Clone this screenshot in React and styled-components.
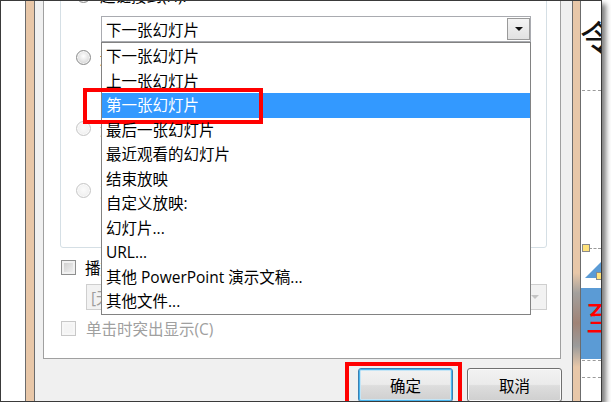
import React from 'react';
import styled, { createGlobalStyle } from 'styled-components';

const GlobalStyle = createGlobalStyle`
  html, body {
    margin: 0;
    padding: 0;
    background: #fff;
  }
  body {
    font-family: "Open Sans", "Noto Sans CJK SC", sans-serif;
    font-size: 15.5px;
    color: #000;
  }
`;

const Frame = styled.div`
  width: 602px;
  height: 402px;
  box-sizing: border-box;
  border: 1px solid #3a3a3a;
  box-shadow: 4px 4px 5px rgba(0, 0, 0, 0.5);
  display: flex;
  overflow: hidden;
  background: #fff;
`;

const Gutter = styled.div`
  flex: none;
  width: 24px;
  background: #fff;
`;

const Sash = styled.div`
  flex: none;
  width: ${p => p.$w}px;
  box-sizing: border-box;
  border-left: 1px solid #6c6c6c;
  border-right: 1px solid #6c6c6c;
  background: ${p => p.$shaded
    ? 'linear-gradient(to bottom, #e8c7a8 0, #e8c7a8 272px, #a3a09d 292px, #a08376 322px, #9b9b9b 345px, #e8c7a8 366px, #e8c7a8 100%)'
    : '#e8c7a8'};
`;

const Dialog = styled.div`
  flex: none;
  width: 537px;
  background: #f0f0f0;
  display: flex;
  flex-direction: column;
`;

const Panel = styled.div`
  flex: none;
  height: 358px;
  margin: 0 11px 0 8px;
  box-sizing: border-box;
  border: 1px solid #a0a0a0;
  border-top: none;
  background: #fff;
  overflow: hidden;
  display: flex;
  flex-direction: column;
`;

const GroupBox = styled.div`
  margin: -27px 13px 0 16px;
  padding: 10px 0 13px 15px;
  border: 1px solid #d5dfe5;
  border-radius: 3px;
  display: flex;
  flex-direction: column;
`;

const OptionRow = styled.div`
  display: flex;
  align-items: center;
  gap: 9px;
  height: 20px;
  margin-top: ${p => p.$mt || 0}px;
  white-space: nowrap;
  color: ${p => (p.$disabled ? '#a0a0a0' : '#000')};
`;

const Radio = styled.span`
  flex: none;
  width: 15px;
  height: 15px;
  box-sizing: border-box;
  border-radius: 50%;
  border: 1px solid ${p => (p.$disabled ? '#c6c6c6' : '#8c8d8d')};
  background: ${p => (p.$disabled
    ? 'radial-gradient(circle at 50% 45%, #fbfbfb 0%, #f1f1f1 60%, #e6e6e6 100%)'
    : 'radial-gradient(circle at 50% 40%, #ffffff 0%, #e4e4e4 50%, #c4c4c4 100%)')};
  box-shadow: inset 0 0 0 1px rgba(255, 255, 255, 0.7);
`;

const ComboWrap = styled.div`
  position: relative;
  margin: ${p => p.$mt || 0}px 15px 0 25px;
`;

const Combo = styled.div`
  height: 26px;
  box-sizing: border-box;
  margin: ${p => p.$margin || 0};
  border: 1px solid ${p => (p.$disabled ? '#cfcfcf' : '#a9abb0')};
  background: ${p => (p.$disabled ? '#f2f2f2' : '#fff')};
  color: ${p => (p.$disabled ? '#9e9e9e' : '#000')};
  display: flex;
  align-items: center;
  padding-left: 4px;
  white-space: nowrap;
`;

const DropButton = styled.span`
  flex: none;
  width: 23px;
  height: 22px;
  margin-left: auto;
  box-sizing: border-box;
  border: 1px solid ${p => (p.$disabled ? 'transparent' : '#9a9a9a')};
  background: ${p => (p.$disabled ? 'transparent' : 'linear-gradient(#f4f4f4, #e2e2e2)')};
  display: flex;
  align-items: center;
  justify-content: center;

  &::after {
    content: '';
    border-left: 4px solid transparent;
    border-right: 4px solid transparent;
    border-top: 4px solid ${p => (p.$disabled ? '#c4c4c4' : '#111')};
  }
`;

const TextBox = styled.div`
  height: 26px;
  margin: ${p => p.$mt || 0}px 15px 0 25px;
  box-sizing: border-box;
  border: 1px solid #cfcfcf;
  background: #f4f4f4;
`;

const DropList = styled.ul`
  position: absolute;
  z-index: 10;
  top: 100%;
  left: 0;
  right: 0;
  margin: 0;
  padding: 1px 0 0;
  list-style: none;
  box-sizing: border-box;
  border: 1px solid #828282;
  background: #fff;
`;

const ListItem = styled.li`
  position: relative;
  height: 24.5px;
  line-height: 24.5px;
  padding-left: 4px;
  white-space: nowrap;
  background: ${p => (p.$selected ? '#3399ff' : 'transparent')};
  color: ${p => (p.$selected ? '#fff' : '#000')};
`;

const Callout = styled.span`
  position: absolute;
  left: ${p => p.$left}px;
  top: ${p => p.$top}px;
  width: ${p => p.$width}px;
  height: ${p => p.$height}px;
  box-sizing: border-box;
  border: 4px solid #ff0000;
  pointer-events: none;
`;

const CheckRow = styled.div`
  display: flex;
  align-items: center;
  gap: ${p => p.$gap || 9}px;
  height: 16px;
  margin: ${p => p.$mt || 0}px 0 0 17px;
  white-space: nowrap;
  color: ${p => (p.$disabled ? '#a0a0a0' : '#000')};
`;

const CheckBox = styled.span`
  flex: none;
  width: 15px;
  height: 15px;
  box-sizing: border-box;
  border: 1px solid ${p => (p.$disabled ? '#c8c8c8' : '#8e8f8f')};
  background: ${p => (p.$disabled ? '#f4f4f4' : 'linear-gradient(135deg, #c9c9c9, #f5f5f5)')};
  box-shadow: inset 0 0 0 2px ${p => (p.$disabled ? '#f7f7f7' : '#f1f1f1')};
`;

const ButtonRow = styled.div`
  display: flex;
  justify-content: flex-end;
  gap: 14px;
  padding: 9px 10px 0 0;
`;

const Button = styled.div`
  position: relative;
  flex: none;
  width: 95px;
  height: 34px;
  box-sizing: border-box;
  border: 1px solid ${p => (p.$default ? '#3c7fb1' : '#707070')};
  border-radius: 3px;
  background: linear-gradient(#f2f2f2 0%, #ebebeb 48%, #dddddd 52%, #cfcfcf 100%);
  box-shadow: ${p => (p.$default
    ? 'inset 0 0 0 1px #48b5ee, inset 0 0 0 2px #c4e5f6'
    : 'inset 0 0 0 1px #fafafa')};
  display: flex;
  align-items: center;
  justify-content: center;
  font-family: "Noto Sans CJK SC", sans-serif;
  font-size: 15.5px;
`;

const Slide = styled.div`
  position: relative;
  flex: none;
  width: 20px;
  background: #fff;
  overflow: hidden;
`;

const SlideChar = styled.span`
  position: absolute;
  left: ${p => p.$left}px;
  top: ${p => p.$top}px;
  font-family: "Noto Sans CJK SC", sans-serif;
  font-size: ${p => p.$size}px;
  line-height: 1;
  color: ${p => p.$color};
`;

const Guide = styled.div`
  position: absolute;
  left: ${p => p.$left}px;
  right: 0;
  top: ${p => p.$top}px;
  border-top: 1px dashed #9a9a9a;
`;

const Handle = styled.span`
  position: absolute;
  left: ${p => p.$left}px;
  top: ${p => p.$top}px;
  width: 6px;
  height: 6px;
  background: #ffe27a;
  border: 1px solid #8a8a8a;
`;

const ShapeBody = styled.div`
  position: absolute;
  left: 0;
  right: 0;
  top: 287px;
  height: 71px;
  background: #5b9bd5;
`;

const Arrowhead = styled.svg`
  position: absolute;
  left: 0;
  top: 260px;
`;

const targets = [
  '下一张幻灯片',
  '上一张幻灯片',
  '第一张幻灯片',
  '最后一张幻灯片',
  '最近观看的幻灯片',
  '结束放映',
  '自定义放映:',
  '幻灯片...',
  'URL...',
  '其他 PowerPoint 演示文稿...',
  '其他文件...',
];

export default function App() {
  return (
    <>
      <GlobalStyle />
      <Frame>
        <Gutter />
        <Sash $w={10} />
        <Dialog>
          <Panel>
            <GroupBox>
              <OptionRow>
                <Radio />
                <span>超链接到(H):</span>
              </OptionRow>
              <ComboWrap $mt={11}>
                <Combo>
                  下一张幻灯片
                  <DropButton />
                </Combo>
                <DropList>
                  {targets.map((t, i) => (
                    <ListItem key={t} $selected={i === 2}>
                      {t}
                      {i === 2 && <Callout $left={-19} $top={-5} $width={180} $height={36} />}
                    </ListItem>
                  ))}
                </DropList>
              </ComboWrap>
              <OptionRow $mt={5}>
                <Radio />
                <span>运行程序(R):</span>
              </OptionRow>
              <TextBox $mt={8} />
              <OptionRow $mt={17} $disabled>
                <Radio $disabled />
                <span>运行宏(M):</span>
              </OptionRow>
              <TextBox $mt={8} />
              <OptionRow $mt={8} $disabled>
                <Radio $disabled />
                <span>对象动作(A):</span>
              </OptionRow>
              <TextBox $mt={8} />
            </GroupBox>

            <CheckRow $mt={11}>
              <CheckBox />
              <span>播放声音(P):</span>
            </CheckRow>
            <Combo $disabled $margin="9px 13px 0 42px">
              [无声音]
              <DropButton $disabled />
            </Combo>
            <CheckRow $mt={10} $gap={10} $disabled>
              <CheckBox $disabled />
              <span>单击时突出显示(C)</span>
            </CheckRow>
          </Panel>

          <ButtonRow>
            <Button $default>
              确定
              <Callout $left={-14} $top={-7} $width={117} $height={50} />
            </Button>
            <Button>取消</Button>
          </ButtonRow>
        </Dialog>
        <Sash $w={9} $shaded />
        <Slide>
          <SlideChar $left={-1} $top={17} $size={36} $color="#111">令</SlideChar>
          <Guide $left={1} $top={89} />
          <Guide $left={8} $top={247} />
          <Handle $left={1} $top={243} />
          <Arrowhead width="20" height="20" viewBox="0 0 20 20">
            <polygon points="4,17 20,1 20,17" fill="#5b9bd5" />
          </Arrowhead>
          <Handle $left={15} $top={271} />
          <ShapeBody />
          <SlideChar $left={5} $top={299} $size={34} $color="#ff0000">至</SlideChar>
          <Guide $left={1} $top={359} />
          <Guide $left={1} $top={376} />
        </Slide>
      </Frame>
    </>
  );
}
